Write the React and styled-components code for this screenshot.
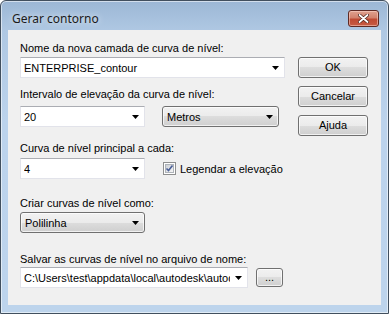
import React from 'react';
import styled, { createGlobalStyle } from 'styled-components';

const GlobalStyle = createGlobalStyle`
  html, body {
    margin: 0;
    padding: 0;
    background: #ffffff;
  }
  body {
    font-family: "Liberation Sans", Arial, sans-serif;
    font-size: 11px;
  }
`;

const Frame = styled.div`
  box-sizing: border-box;
  width: 389px;
  height: 314px;
  border: 1px solid #414f5e;
  border-radius: 6px 6px 0 0;
  background: linear-gradient(to bottom, #9cb7d5 0px, #afc8e3 30px, #bcd3ec 120px, #bdd4ec 100%);
  box-shadow: inset 0 0 0 1px rgba(255, 255, 255, 0.55);
  display: flex;
  flex-direction: column;
  padding: 0 7px 8px 7px;
`;

const TitleBar = styled.div`
  height: 29px;
  display: flex;
  align-items: flex-start;
  justify-content: space-between;
  padding: 0 2px 0 4px;
`;

const Title = styled.span`
  font-family: "Noto Sans", "Open Sans", sans-serif;
  font-size: 12px;
  color: #1b1b1b;
  margin-top: 9px;
  text-shadow: 0 0 6px rgba(255, 255, 255, 0.9);
`;

const CloseButton = styled.div`
  box-sizing: border-box;
  width: 31px;
  height: 17px;
  margin-top: 9px;
  border: 1px solid #5e2a24;
  border-radius: 3px;
  background: linear-gradient(to bottom, #dfa18f 0%, #d2826d 45%, #bf4a33 55%, #c75c44 100%);
  box-shadow: inset 0 0 0 1px rgba(255, 220, 210, 0.5);
  display: flex;
  align-items: center;
  justify-content: center;
`;

const Client = styled.div`
  flex: 1;
  background: #f0f0f0;
  display: flex;
  padding: 0 13px 0 12px;
  gap: 13px;
`;

const LeftColumn = styled.div`
  width: 265px;
  display: flex;
  flex-direction: column;
`;

const RightColumn = styled.div`
  display: flex;
  flex-direction: column;
  gap: 8px;
  padding-top: 27px;
`;

const Label = styled.div`
  color: #000;
  line-height: 13px;
  height: 13px;
  white-space: nowrap;
  margin-top: ${({ $top }) => $top}px;
  margin-bottom: ${({ $gap }) => $gap}px;
`;

const Row = styled.div`
  display: flex;
  align-items: center;
  gap: ${({ $gap }) => $gap || 0}px;
`;

const EditCombo = styled.div`
  box-sizing: border-box;
  width: ${({ $w }) => $w}px;
  height: 21px;
  background: #fff;
  border: 1px solid #e2e3ea;
  border-top-color: #abadb3;
  display: flex;
  align-items: center;
  padding-left: 3px;
  color: #000;
`;

const ComboText = styled.span`
  flex: 1;
  overflow: hidden;
  white-space: nowrap;
`;

const ArrowBox = styled.span`
  width: 17px;
  height: 100%;
  flex: none;
  display: flex;
  align-items: center;
  justify-content: center;
`;

const ListCombo = styled.div`
  box-sizing: border-box;
  width: ${({ $w }) => $w}px;
  height: 21px;
  border: 1px solid #707070;
  border-radius: 3px;
  background: linear-gradient(to bottom, #f2f2f2 0%, #ebebeb 50%, #dddddd 50%, #cfcfcf 100%);
  box-shadow: inset 0 0 0 1px rgba(255, 255, 255, 0.7);
  display: flex;
  align-items: center;
  padding-left: 4px;
  color: #000;
`;

const Button = styled.div`
  box-sizing: border-box;
  width: ${({ $w }) => $w || 70}px;
  height: ${({ $h }) => $h || 21}px;
  border: 1px solid #707070;
  border-radius: 3px;
  background: linear-gradient(to bottom, #f2f2f2 0%, #ebebeb 50%, #dddddd 50%, #cfcfcf 100%);
  box-shadow: inset 0 0 0 1px rgba(255, 255, 255, 0.7);
  display: flex;
  align-items: center;
  justify-content: center;
  color: #000;
  line-height: 1;
`;

const CheckRow = styled.label`
  display: flex;
  align-items: center;
  gap: 4px;
  margin-left: 18px;
  color: #000;
`;

const CheckBox = styled.span`
  box-sizing: border-box;
  width: 13px;
  height: 13px;
  border: 1px solid #8e8f8f;
  background: #fff;
  display: flex;
  align-items: center;
  justify-content: center;
`;

const CheckInner = styled.span`
  box-sizing: border-box;
  width: 9px;
  height: 9px;
  border: 1px solid #aeb3b9;
  background: linear-gradient(135deg, #cbcfd5 0%, #f6f6f6 100%);
  position: relative;
`;

const Arrow = () => (
  <svg width="7" height="4" viewBox="0 0 7 4">
    <polygon points="0,0 7,0 3.5,4" fill="#000" />
  </svg>
);

const Check = () => (
  <svg width="9" height="9" viewBox="0 0 9 9" style={{ position: 'absolute', left: -1, top: -1 }}>
    <path d="M1.5 4.5 L3.5 6.5 L7.5 1.5" stroke="#4a5f97" strokeWidth="1.6" fill="none" />
  </svg>
);

const CloseGlyph = () => (
  <svg width="11" height="9" viewBox="0 0 11 9">
    <path d="M1.5 1 L9.5 8 M9.5 1 L1.5 8" stroke="#4a2018" strokeWidth="3.2" strokeLinecap="round" />
    <path d="M1.5 1 L9.5 8 M9.5 1 L1.5 8" stroke="#ffffff" strokeWidth="1.8" strokeLinecap="round" />
  </svg>
);

export default function App() {
  return (
    <>
      <GlobalStyle />
      <Frame>
        <TitleBar>
          <Title>Gerar contorno</Title>
          <CloseButton>
            <CloseGlyph />
          </CloseButton>
        </TitleBar>
        <Client>
          <LeftColumn>
            <Label $top={12} $gap={2}>Nome da nova camada de curva de nível:</Label>
            <EditCombo $w={265}>
              <ComboText>ENTERPRISE_contour</ComboText>
              <ArrowBox><Arrow /></ArrowBox>
            </EditCombo>

            <Label $top={10} $gap={5}>Intervalo de elevação da curva de nível:</Label>
            <Row $gap={17}>
              <EditCombo $w={125}>
                <ComboText>20</ComboText>
                <ArrowBox><Arrow /></ArrowBox>
              </EditCombo>
              <ListCombo $w={117}>
                <ComboText>Metros</ComboText>
                <ArrowBox><Arrow /></ArrowBox>
              </ListCombo>
            </Row>

            <Label $top={15} $gap={3}>Curva de nível principal a cada:</Label>
            <Row>
              <EditCombo $w={125}>
                <ComboText>4</ComboText>
                <ArrowBox><Arrow /></ArrowBox>
              </EditCombo>
              <CheckRow>
                <CheckBox>
                  <CheckInner>
                    <Check />
                  </CheckInner>
                </CheckBox>
                Legendar a elevação
              </CheckRow>
            </Row>

            <Label $top={18} $gap={2}>Criar curvas de nível como:</Label>
            <ListCombo $w={125}>
              <ComboText>Polilinha</ComboText>
              <ArrowBox><Arrow /></ArrowBox>
            </ListCombo>

            <Label $top={20} $gap={1}>Salvar as curvas de nível no arquivo de nome:</Label>
            <Row $gap={8}>
              <EditCombo $w={228}>
                <ComboText>C:\Users\test\appdata\local\autodesk\autodesk</ComboText>
                <ArrowBox><Arrow /></ArrowBox>
              </EditCombo>
              <Button $w={27} $h={19}>...</Button>
            </Row>
          </LeftColumn>
          <RightColumn>
            <Button>OK</Button>
            <Button>Cancelar</Button>
            <Button>Ajuda</Button>
          </RightColumn>
        </Client>
      </Frame>
    </>
  );
}
